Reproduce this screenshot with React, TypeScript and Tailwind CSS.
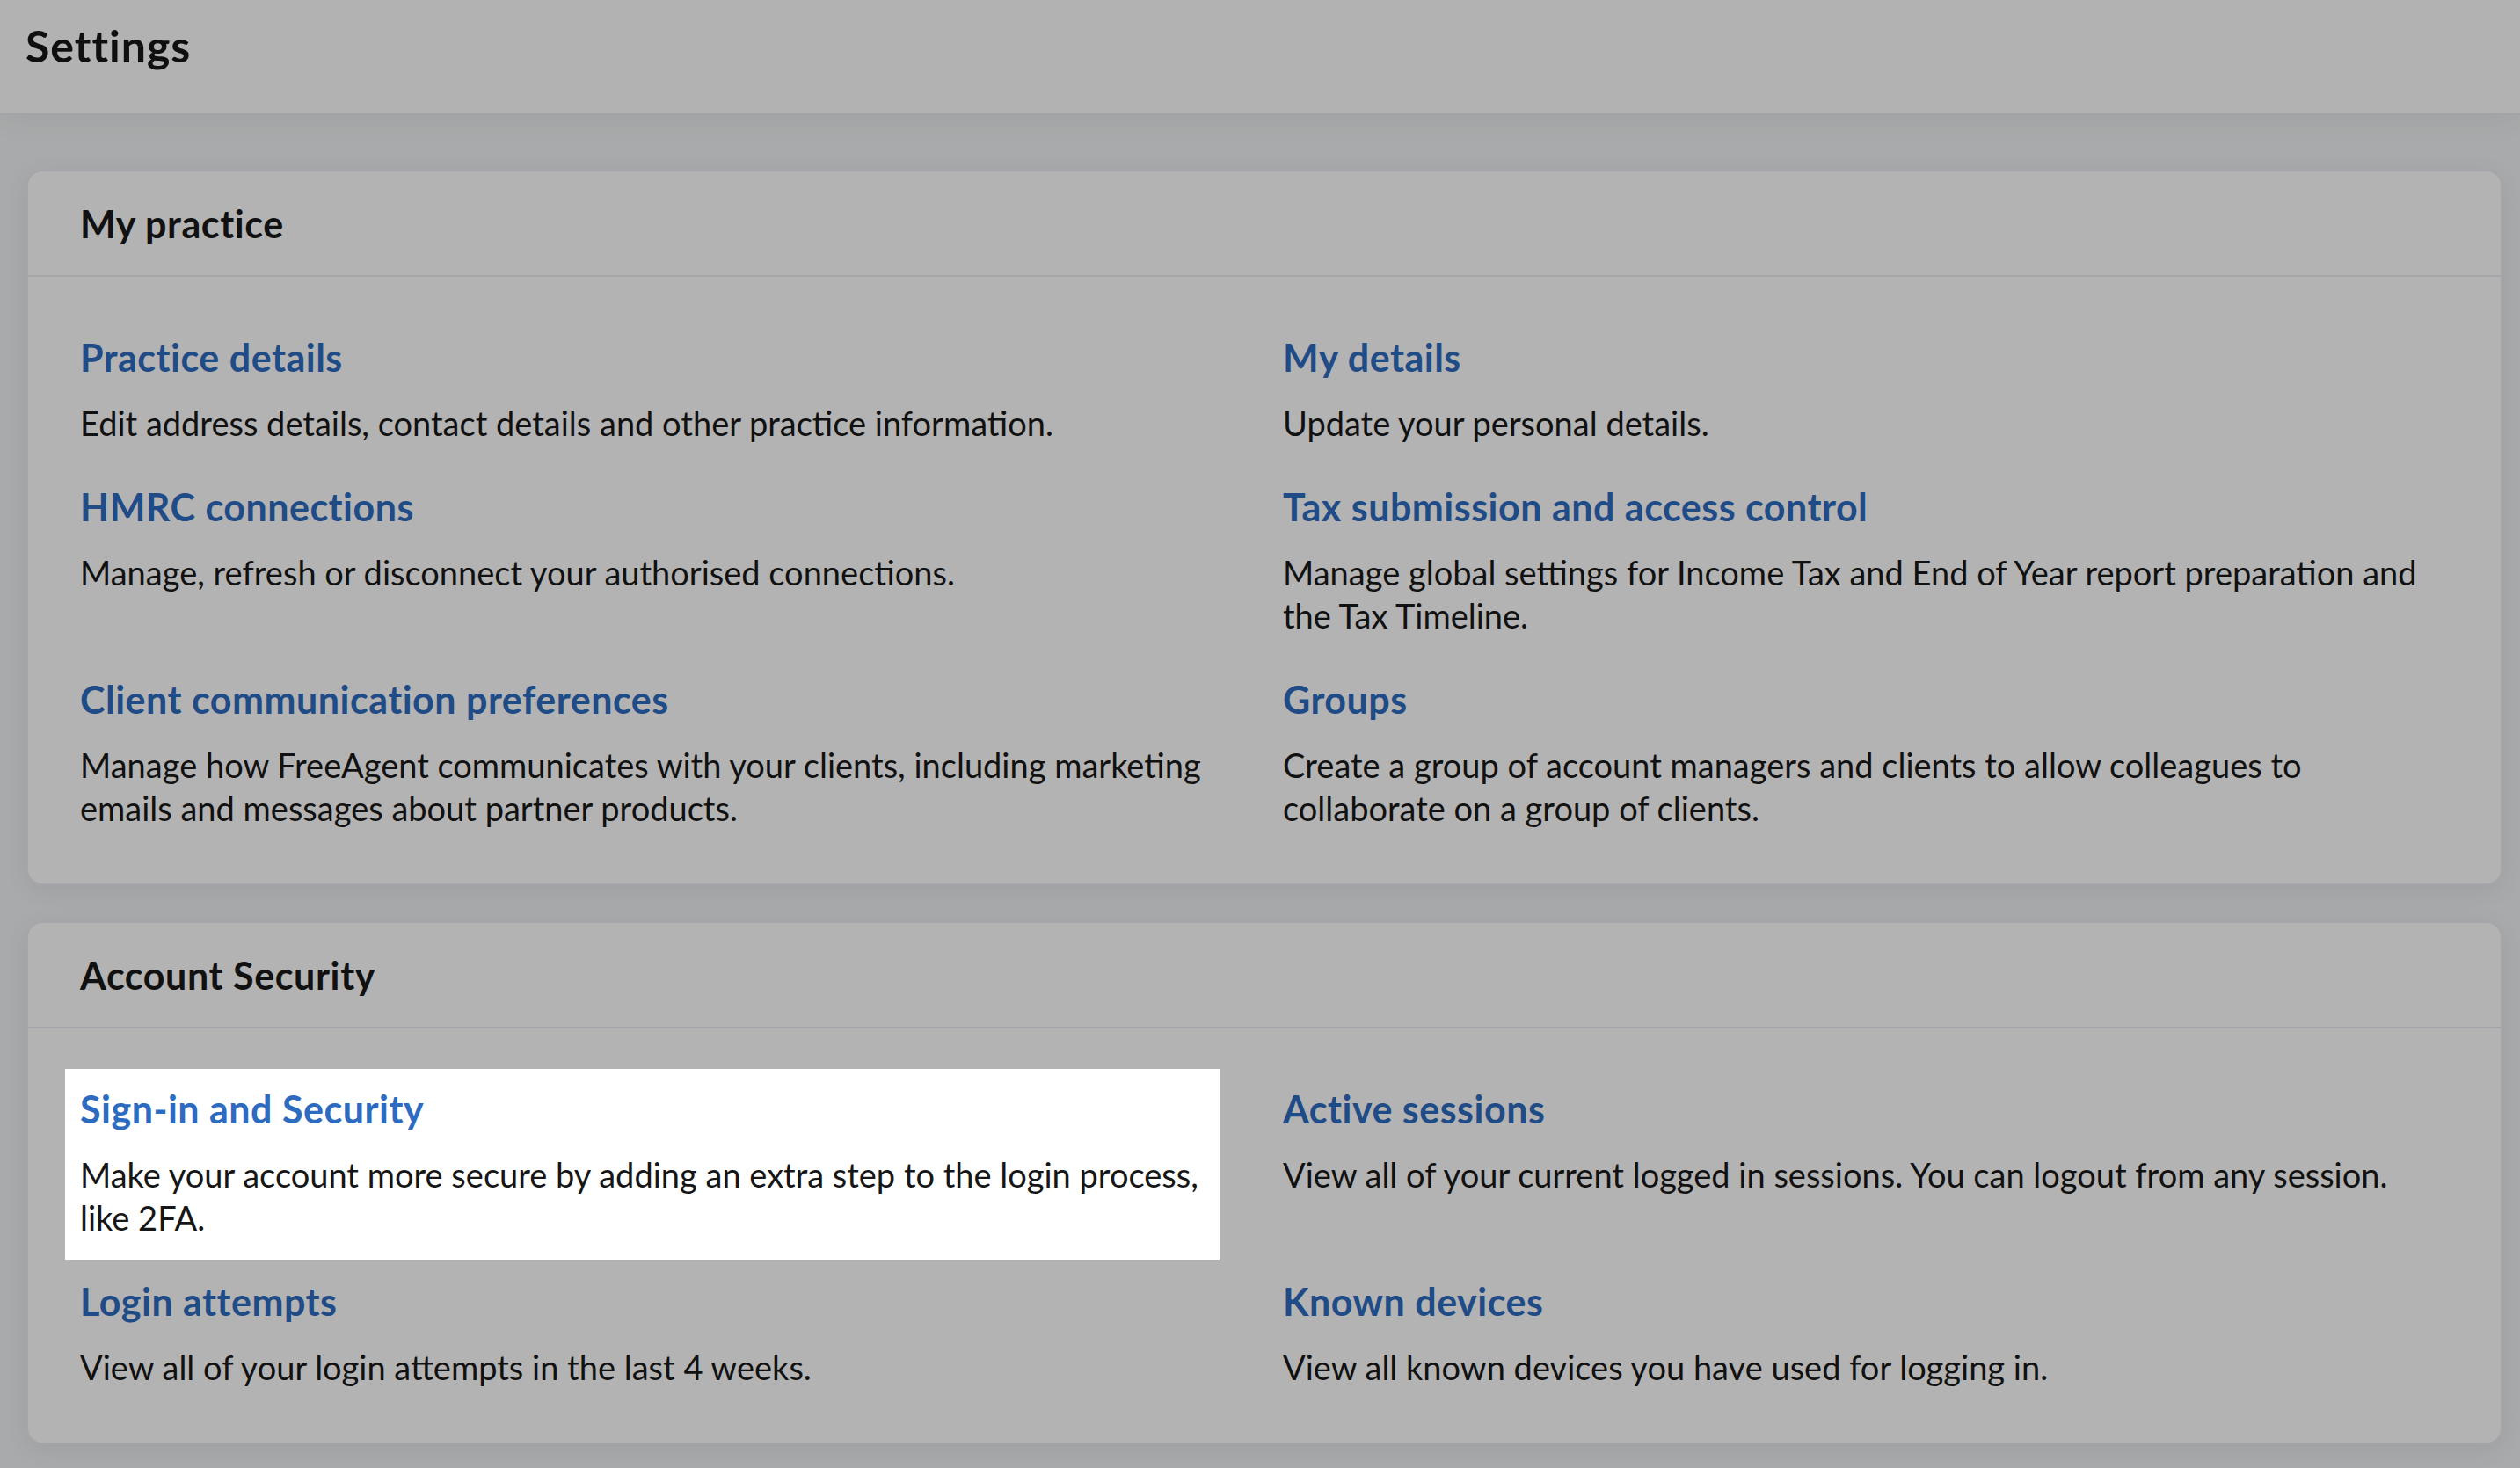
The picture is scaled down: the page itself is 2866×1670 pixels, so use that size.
import React from "react";

type Item = { title: string; desc: string; highlight?: boolean };

const practice: Item[] = [
  { title: "Practice details", desc: "Edit address details, contact details and other practice information." },
  { title: "My details", desc: "Update your personal details." },
  { title: "HMRC connections", desc: "Manage, refresh or disconnect your authorised connections." },
  {
    title: "Tax submission and access control",
    desc: "Manage global settings for Income Tax and End of Year report preparation and the Tax Timeline.",
  },
  {
    title: "Client communication preferences",
    desc: "Manage how FreeAgent communicates with your clients, including marketing emails and messages about partner products.",
  },
  {
    title: "Groups",
    desc: "Create a group of account managers and clients to allow colleagues to collaborate on a group of clients.",
  },
];

const security: Item[] = [
  {
    title: "Sign-in and Security",
    desc: "Make your account more secure by adding an extra step to the login process, like 2FA.",
    highlight: true,
  },
  { title: "Active sessions", desc: "View all of your current logged in sessions. You can logout from any session." },
  { title: "Login attempts", desc: "View all of your login attempts in the last 4 weeks." },
  { title: "Known devices", desc: "View all known devices you have used for logging in." },
];

function SettingItem({ item }: { item: Item }) {
  if (item.highlight) {
    return (
      <div className="bg-white ml-[-17px] pl-[17px] mr-[30px] mt-[-18px] pt-[18px] pb-[23px] mb-[-23px]">
        <a className="block text-[43px] leading-[56px] font-bold tracking-[0.5px] text-[#2d6bc0] cursor-pointer">
          {item.title}
        </a>
        <p className="mt-[22px] text-[38px] leading-[49px] text-[#161616]">{item.desc}</p>
      </div>
    );
  }
  return (
    <div>
      <a className="block text-[43px] leading-[56px] font-bold tracking-[0.5px] text-[#1f4b87] cursor-pointer">
        {item.title}
      </a>
      <p className="mt-[22px] text-[38px] leading-[49px] text-[#111111]">{item.desc}</p>
    </div>
  );
}

function Card({ title, items }: { title: string; items: Item[] }) {
  return (
    <section className="bg-[#b3b3b3] border-2 border-[#a6a6aa] rounded-[18px] shadow-[0_6px_28px_rgba(0,0,0,0.07)]">
      <div className="h-[120px] pt-[32px] pl-[59px] border-b-2 border-[#a6a6aa]">
        <h2 className="text-[43px] leading-[56px] font-bold tracking-[0.6px] text-[#111111]">{title}</h2>
      </div>
      <div className="grid grid-cols-2 gap-x-[42px] gap-y-[43px] pl-[59px] pr-[59px] pt-[64px] pb-[61px]">
        {items.map((it) => (
          <SettingItem key={it.title} item={it} />
        ))}
      </div>
    </section>
  );
}

export default function App() {
  return (
    <div className="min-h-screen bg-[#a9aaab] font-['Lato','Noto_Sans',sans-serif]">
      <header className="h-[131px] bg-[#b2b2b2] border-b-2 border-[#a4a4a8] pl-[29px] pt-[22px] shadow-[0_6px_30px_rgba(0,0,0,0.05)] relative">
        <h1 className="text-[50px] leading-[60px] font-bold tracking-[1px] text-[#0f0f0f]">Settings</h1>
      </header>
      <main className="pl-[30px] pr-[20px] pt-[62px] pb-[29px] flex flex-col gap-[41px]">
        <Card title="My practice" items={practice} />
        <Card title="Account Security" items={security} />
      </main>
    </div>
  );
}
